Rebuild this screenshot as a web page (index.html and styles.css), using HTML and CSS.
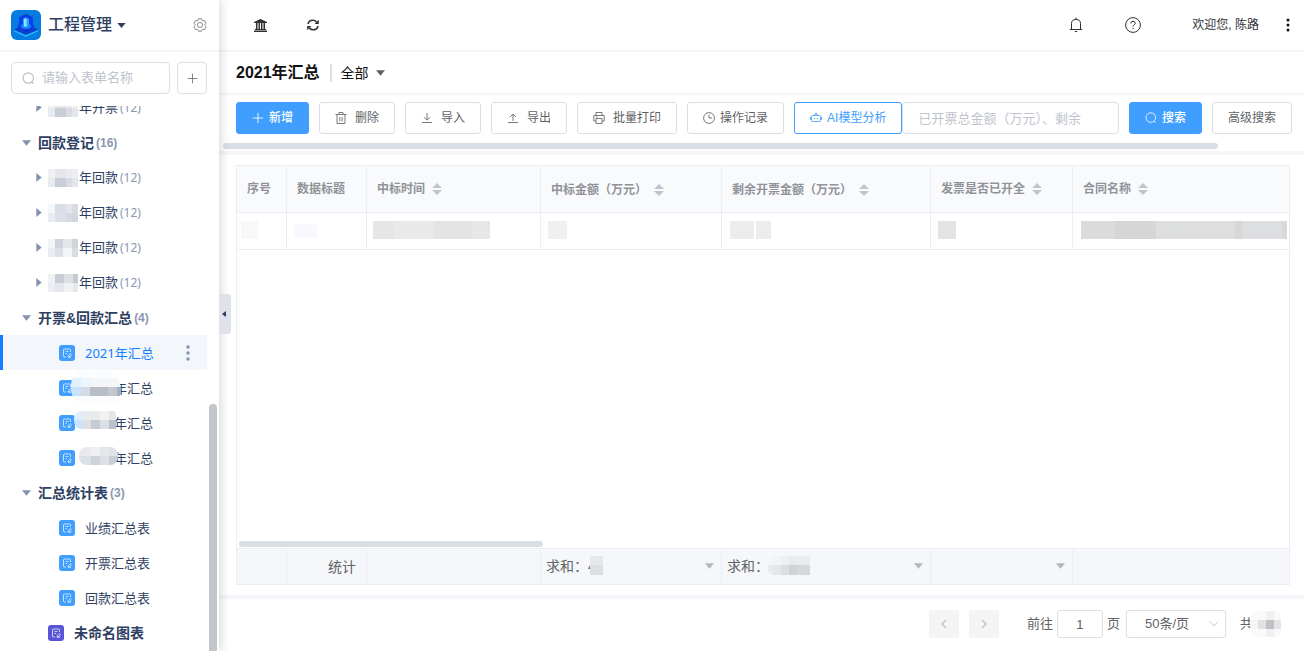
FILE: index.html
```html
<!DOCTYPE html>
<html lang="zh-CN">
<head>
<meta charset="utf-8">
<meta name="viewport" content="width=device-width, initial-scale=1">
<title>工程管理</title>
<link rel="stylesheet" href="styles.css">
</head>
<body>
<svg class="sprite" aria-hidden="true">
  <symbol id="form" viewBox="0 0 16 16"><rect width="16" height="16" rx="3" fill="currentColor"/><path d="M11.500 7V5q0-1-1-1h-5q-1 0-1 1v6q0 1 1 1H7M6.500 6.500h3M6.500 8.500H8M9 12l.3-1.500 2-2 1.200 1.200-2 2zM9 12.200h3.200" fill="none" stroke="#e4f1ff" stroke-width=".8"/></symbol>
  <symbol id="lens" viewBox="0 0 12 12"><circle cx="5.800" cy="5.600" r="4.800" fill="none" stroke="currentColor"/><path d="M9 9.200l1.600 1.800" stroke="currentColor"/></symbol>
  <symbol id="plus" viewBox="0 0 12 12"><path d="M6 .8v10.400M.8 6h10.400" stroke="currentColor"/></symbol>
  <symbol id="sort" viewBox="0 0 10 12"><path d="M5 0l5 5H0zM0 7h10l-5 5z" fill="currentColor"/></symbol>
  <symbol id="down" viewBox="0 0 10 6"><path d="M0 0h10L5 6z" fill="currentColor"/></symbol>
  <symbol id="right" viewBox="0 0 6 10"><path d="M0 0l6 5-6 5z" fill="currentColor"/></symbol>
</svg>
<div class="app">
  <aside class="sidebar">
    <header class="brand">
      <svg class="logo" viewBox="0 0 30 30" aria-hidden="true">
        <rect width="30" height="30" rx="6" fill="#067be0"/>
        <path d="M3 20l4-3 8 4 8-4 4 3-12 5z" fill="#0a3fd0"/>
        <path d="M3 20l12 5 12-5v1.500L15 27 3 21.500z" fill="#22b4f8"/>
        <path d="M8 8l7-3.500L22 8v9l-7 4.500L8 17z" fill="#0d3ff0"/>
        <path d="M8 8l7-3.500L22 8" fill="none" stroke="#0636c4"/>
        <path d="M7 15.500l8 5.500 8-5.500" fill="none" stroke="#0a2fd0" stroke-width="1.500"/>
        <ellipse cx="15" cy="16.500" rx="5.500" ry="2.800" fill="#1a78ff"/>
        <path d="M12 9q3-3 6 0v7q-3 2.500-6 0z" fill="#22a6ff"/>
        <path d="M13 9.500q1.500-1.800 2.500-.8V17l-2.500-.8z" fill="#8ceaff"/>
      </svg>
      <button class="app-name" type="button">工程管理 <svg width="9" height="5"><use href="#down"/></svg></button>
      <button class="icon-button gear" type="button" aria-label="设置">
        <svg width="14" height="14" viewBox="0 0 14 14" fill="none" stroke="currentColor"><path d="M5.500.8h3l.5 1.500 1 .6 1.600-.4 1.500 2.600L12 6.400v1.200l1.100 1.300-1.500 2.600-1.600-.4-1 .6-.5 1.500h-3L5 11.700l-1-.6-1.600.4L.9 8.900 2 7.600V6.400L.9 5.100l1.500-2.600 1.600.4 1-.6z"/><circle cx="7" cy="7" r="2.600"/></svg>
      </button>
    </header>
    <div class="tree-search">
      <label class="tree-field"><svg width="13" height="13"><use href="#lens"/></svg><input type="text" placeholder="请输入表单名称" aria-label="请输入表单名称"></label>
      <button class="add-form" type="button" aria-label="添加"><svg width="11" height="11"><use href="#plus"/></svg></button>
    </div>
    <nav class="tree">
      <ul>
        <li class="row year"><svg width="6" height="9"><use href="#right"/></svg><span class="mask mask-a"></span><span>年开票</span><small>(12)</small></li>
        <li class="row group"><svg width="9" height="6"><use href="#down"/></svg><span>回款登记</span><small>(16)</small></li>
        <li class="row year"><svg width="6" height="9"><use href="#right"/></svg><span class="mask mask-a"></span><span>年回款</span><small>(12)</small></li>
        <li class="row year"><svg width="6" height="9"><use href="#right"/></svg><span class="mask mask-b"></span><span>年回款</span><small>(12)</small></li>
        <li class="row year"><svg width="6" height="9"><use href="#right"/></svg><span class="mask mask-c"></span><span>年回款</span><small>(12)</small></li>
        <li class="row year"><svg width="6" height="9"><use href="#right"/></svg><span class="mask mask-d"></span><span>年回款</span><small>(12)</small></li>
        <li class="row group"><svg width="9" height="6"><use href="#down"/></svg><span>开票&amp;回款汇总</span><small>(4)</small></li>
        <li class="row leaf selected"><svg width="16" height="16"><use href="#form"/></svg><a href="#summary-2021">2021年汇总</a>
          <button class="icon-button row-more" type="button" aria-label="更多"><svg width="4" height="16" fill="currentColor"><circle cx="2" cy="2" r="1.700"/><circle cx="2" cy="8" r="1.700"/><circle cx="2" cy="14" r="1.700"/></svg></button></li>
        <li class="row leaf hidden-year"><svg width="16" height="16"><use href="#form"/></svg><a href="#a">年汇总</a><span class="cover cover-a"></span></li>
        <li class="row leaf hidden-year"><svg width="16" height="16"><use href="#form"/></svg><a href="#b">年汇总</a><span class="cover cover-b"></span></li>
        <li class="row leaf hidden-year"><svg width="16" height="16"><use href="#form"/></svg><a href="#c">年汇总</a><span class="cover cover-c"></span></li>
        <li class="row group"><svg width="9" height="6"><use href="#down"/></svg><span>汇总统计表</span><small>(3)</small></li>
        <li class="row leaf"><svg width="16" height="16"><use href="#form"/></svg><a href="#d">业绩汇总表</a></li>
        <li class="row leaf"><svg width="16" height="16"><use href="#form"/></svg><a href="#e">开票汇总表</a></li>
        <li class="row leaf"><svg width="16" height="16"><use href="#form"/></svg><a href="#f">回款汇总表</a></li>
        <li class="row chart"><svg width="16" height="16"><use href="#form"/></svg><a href="#g">未命名图表</a></li>
      </ul>
      <span class="tree-thumb"></span>
    </nav>
    <button class="collapse" type="button" aria-label="收起"><svg width="4" height="6"><path d="M4 0v6L0 3z" fill="#303c5c"/></svg></button>
  </aside>

  <main class="main">
    <header class="topbar">
      <button class="icon-button" type="button" aria-label="首页"><svg width="13" height="13" viewBox="0 0 13 13" fill="currentColor"><path d="M6.500 0L13 3v1H0V3zM2 4h1.500v6H2zM4.500 4H6v6H4.500zM7 4h1.500v6H7zM9.500 4H11v6H9.500zM1 10h11v1H1zM0 11.500h13V13H0z"/></svg></button>
      <button class="icon-button" type="button" aria-label="刷新"><svg width="12" height="12" viewBox="0 0 12 12"><path d="M1 5q.8-3.800 5-3.800 2 0 3.600 1.700M11 7q-.8 3.800-5 3.800-2 0-3.600-1.700" fill="none" stroke="currentColor" stroke-width="1.600"/><path d="M11.800.8V5H7.600zM.2 11.200V7h4.200z" fill="currentColor"/></svg></button>
      <div class="user-tools">
        <button class="icon-button" type="button" aria-label="通知"><svg width="14" height="16" viewBox="0 0 14 16" fill="none" stroke="currentColor"><path d="M7 .5V2M2.500 12.500v-6Q2.500 2.500 7 2.500t4.500 4v6M.8 12.500h12.400M5.800 14.500h2.400"/></svg></button>
        <button class="icon-button" type="button" aria-label="帮助"><svg width="16" height="16" viewBox="0 0 16 16" fill="none" stroke="currentColor"><circle cx="8" cy="8" r="7.400"/><path d="M5.800 6.500q0-2.300 2.200-2.300t2.200 2q0 1-1.100 1.700T8 9.700M8 10.900v1.300"/></svg></button>
        <span class="welcome">欢迎您, 陈路</span>
        <button class="icon-button more" type="button" aria-label="更多"><svg width="4" height="14" fill="#111"><circle cx="2" cy="2" r="1.500"/><circle cx="2" cy="7" r="1.500"/><circle cx="2" cy="12" r="1.500"/></svg></button>
      </div>
    </header>

    <div class="titlebar">
      <h1>2021年汇总</h1>
      <button class="view-picker" type="button">全部 <svg width="9" height="6"><use href="#down"/></svg></button>
    </div>

    <section class="toolbar">
      <div class="tools">
        <div class="actions">
          <button class="btn primary tight" type="button"><svg><use href="#plus"/></svg>新增</button>
          <button class="btn" type="button"><svg viewBox="0 0 12 12"><path d="M.5 2.500h11M4 2.500v-2h4v2M2 2.500v9h8v-9M4.800 5v4.500M7.200 5v4.500"/></svg>删除</button>
          <button class="btn" type="button"><svg viewBox="0 0 12 12"><path d="M6 1v7M3 5.200l3 3 3-3M1 10.500h10"/></svg>导入</button>
          <button class="btn" type="button"><svg viewBox="0 0 12 12"><path d="M6 9V2M3 5l3-3 3 3M1 10.500h10"/></svg>导出</button>
          <button class="btn" type="button"><svg viewBox="0 0 12 12"><path d="M3 3.500v-3h6v3M3 9H.8V3.500h10.400V9H9M3 6.500h6v5H3zM3 5h1.500"/></svg>批量打印</button>
          <button class="btn tight" type="button"><svg viewBox="0 0 12 12"><circle cx="6" cy="6" r="5.400"/><path d="M6 2.800V6h3"/></svg>操作记录</button>
          <button class="btn outline tight" type="button"><svg viewBox="0 0 12 12"><path d="M2.500 3.500h7q1 0 1 1v4q0 1-1 1h-7q-1 0-1-1v-4q0-1 1-1zM4 3.300Q4.500 2 6 2t2 1.300M6 2V.8M.5 5v3M11.500 5v3M4.500 6v1.200M7.500 6v1.200"/></svg>AI模型分析</button>
        </div>
        <form class="search">
          <input type="text" placeholder="已开票总金额（万元）、剩余" aria-label="搜索内容">
          <button class="btn primary tight" type="button"><svg><use href="#lens"/></svg>搜索</button>
          <button class="btn" type="button">高级搜索</button>
        </form>
      </div>
      <div class="tools-thumb"></div>
    </section>

    <section class="sheet">
      <div class="grid">
        <table>
          <colgroup><col class="c1"><col class="c2"><col class="c3"><col class="c4"><col class="c5"><col class="c6"><col></colgroup>
          <thead><tr><th>序号</th><th>数据标题</th><th>中标时间<svg><use href="#sort"/></svg></th><th>中标金额<span class="centred">（</span>万元<span class="centred">）</span><svg><use href="#sort"/></svg></th><th>剩余开票金额<span class="centred">（</span>万元<span class="centred">）</span><svg><use href="#sort"/></svg></th><th>发票是否已开全<svg><use href="#sort"/></svg></th><th>合同名称<svg><use href="#sort"/></svg></th></tr></thead>
          <tbody><tr><td><span class="blank b1"></span></td><td><span class="blank b2"></span></td><td><span class="blank b3"></span></td><td><span class="blank b4"></span></td><td><span class="blank b5"></span></td><td><span class="blank b6"></span></td><td><span class="blank b7"></span></td></tr></tbody>
        </table>
        <div class="space"><div class="grid-thumb"></div></div>
        <table class="totals">
          <colgroup><col class="c1"><col class="c2"><col class="c3"><col class="c4"><col class="c5"><col class="c6"><col></colgroup>
          <tbody><tr><td></td><td class="stat">统计</td><td></td>
            <td><button class="sum" type="button"><span>求和<span class="centred">：</span><span class="digits">4<span class="veil veil-a"></span></span></span><svg width="9" height="6"><use href="#down"/></svg></button></td>
            <td><button class="sum" type="button"><span>求和<span class="centred">：</span><span class="digits"><span class="veil veil-b"></span></span></span><svg width="9" height="6"><use href="#down"/></svg></button></td>
            <td><button class="sum" type="button" aria-label="统计方式"><span></span><svg width="9" height="6"><use href="#down"/></svg></button></td><td></td></tr></tbody>
        </table>
      </div>
    </section>

    <footer class="pager">
      <button class="page-step" type="button" aria-label="上一页"><svg width="8" height="12"><path d="M6 2L2 6l4 4"/></svg></button>
      <button class="page-step" type="button" aria-label="下一页"><svg width="8" height="12"><path d="M2 2l4 4-4 4"/></svg></button>
      <label class="goto"><span>前往</span><input type="text" value="1"><span>页</span></label>
      <span class="size"><select aria-label="每页条数"><option>50条/页</option></select><svg width="10" height="6"><path d="M1 .5l4 4.500L9 .5"/></svg></span>
      <span class="total">共<span class="total-mask"></span></span>
    </footer>
  </main>
</div>
</body>
</html>
```
FILE: styles.css
```css
* { box-sizing: border-box; }
body {
  margin: 0;
  color: #606266;
  background: #fff;
  font: 13px/20px "Liberation Sans", "Noto Sans CJK SC", sans-serif;
}
button, input, select { font: inherit; color: inherit; margin: 0; }
button { padding: 0; border: 0; background: none; cursor: pointer; }
a { color: inherit; text-decoration: none; }
svg { display: block; flex: none; }
.sprite { position: absolute; width: 0; height: 0; }
input::placeholder { color: #c0c4cc; opacity: 1; }
.centred { font-family: "Noto Sans CJK TC", sans-serif; }
.app { display: grid; grid-template-columns: 219px minmax(0, 1fr); height: 100vh; }
.icon-button { display: flex; align-items: center; }

/* Sidebar */
.sidebar {
  position: relative;
  z-index: 1;
  display: flex;
  flex-direction: column;
  min-height: 0;
  background: #fff;
  box-shadow: 2px 0 10px rgba(0, 0, 0, .15);
  color: #2f3f63;
}
.brand {
  display: flex;
  align-items: center;
  height: 52px;
  flex: none;
  padding: 0 12px 0 11px;
  border-bottom: 2px solid #f4f6fb;
}
.logo { width: 30px; height: 30px; }
.app-name {
  display: flex;
  align-items: center;
  gap: 5px;
  margin-left: 7px;
  font-size: 16px;
  line-height: 24px;
  font-weight: 500;
}
.gear { margin-left: auto; color: #85888e; }
.tree-search { display: flex; gap: 7px; padding: 10px 12px 12px 11px; }
.tree-field, .add-form {
  display: flex;
  align-items: center;
  height: 32px;
  border: 1px solid #dcdfe6;
  border-radius: 4px;
}
.tree-field { flex: 1; min-width: 0; padding-left: 10px; gap: 7px; color: #b9bdc6; }
.tree-field input { width: 100%; min-width: 0; padding: 0; border: 0; outline: 0; background: none; }
.add-form { width: 30px; justify-content: center; color: #75787e; }
.tree { position: relative; flex: 1; min-height: 0; overflow: hidden; }
.tree ul { list-style: none; margin: -16px 12px 0 0; padding: 0; }
.row { position: relative; display: flex; align-items: center; height: 35px; white-space: nowrap; }
.row > svg { color: #8492ae; }
.row small { margin-left: 2px; font-size: 12px; color: #8b97b0; }
.group { padding-left: 22px; font-size: 14px; font-weight: 700; }
.group > svg { margin-right: 7px; }
.year { padding-left: 36px; }
.year small { font-family: "Noto Sans", sans-serif; }
.leaf { padding-left: 59px; gap: 10px; font-family: "Noto Sans", "Noto Sans CJK SC", sans-serif; }
.row.leaf > svg { color: #409eff; }
.chart { padding-left: 48px; gap: 10px; font-size: 14px; font-weight: 700; }
.row.chart > svg { color: #5a55d6; }
.selected { background: #f3f7fc; border-left: 3px solid #127dff; padding-left: 56px; color: #127dff; }
.row-more { margin-left: auto; padding-right: 17px; color: #8492ae; }
.hidden-year a { margin-left: 29px; }
.mask { width: 30px; height: 18px; margin: 0 1px 0 6px; background-size: 100% 50%; background-repeat: no-repeat; background-position: top, bottom; }
.mask-a { background-image: linear-gradient(90deg, #eff1f3 7px, #e4e6ea 7px 18px, #e9ebee 18px 24px, #edeff1 24px), linear-gradient(90deg, #e7eaee 7px, #c8cdd7 7px 18px, #d8dce2 18px 24px, #e3e6ec 24px); }
.mask-b { background-image: linear-gradient(90deg, #f4f6f8 7px, #dadee7 7px 18px, #e4e5e9 18px 24px, #d8dce2 24px), linear-gradient(90deg, #e9ecf0 7px, #dce1e9 7px 18px, #d6dae3 18px 24px, #d1d6df 24px); }
.mask-c { background-image: linear-gradient(90deg, #f2f4f5 7px, #ced3de 7px 15px, #e4e6ea 15px 24px, #ced3dc 24px), linear-gradient(90deg, #e9ecf0 7px, #dce0e9 7px 15px, #f4f5f6 15px 24px, #d8dce4 24px); }
.mask-d { background-image: linear-gradient(90deg, #f1f2f4 7px, #c7ccd5 7px 16px, #dfe0e5 16px 25px, #c4c9d2 25px), linear-gradient(90deg, #eceef1 7px, #e4e6eb 7px 16px, #f0f1f3 16px 25px, #e3e6eb 25px); }
.cover { position: absolute; height: 18px; background-size: 100% 50%; background-repeat: no-repeat; background-position: top, bottom; }
.cover-a { left: 71px; top: -1px; width: 50px; height: 36px; border-radius: 18px 24px 16px 18px; background-color: #fbfcfd; background-size: 100% 9px; background-position: 0 9px, 0 18px; background-image: linear-gradient(90deg, #e3f1ff 10px, #edf5fc 10px 20px, #f5f6f8 20px), linear-gradient(90deg, #c9e2fd 10px, #d4dbe5 10px 19px, #b8bdca 19px 37px, #c4c7d0 37px 46px, #a8afbe 46px); }
.cover-b { left: 74px; top: 6px; width: 42px; border-radius: 8px 3px 0 8px; background-image: linear-gradient(90deg, #e0efff 8px, #e9eaec 8px 26px, #f2f2f3 26px 35px, #e4e6e9 35px), linear-gradient(90deg, #c9e2fd 8px, #dcdfe5 8px 17px, #c6cad3 17px 26px, #dcdfe5 26px 35px, #bac0cc 35px); }
.cover-c { left: 79px; top: 7px; width: 39px; border-radius: 8px; background-image: linear-gradient(90deg, #e8eaee 12px, #f0f0f2 12px 21px, #e4e6ea 21px 30px, #dfe2e6 30px), linear-gradient(90deg, #dae1e9 12px, #ced2d9 12px 21px, #dedfe5 21px 30px, #c9cdd6 30px); }
.tree-thumb { position: absolute; right: 2px; top: 298px; bottom: 0; width: 8px; border-radius: 4px 4px 0 0; background: #c2c6cc; }
.collapse {
  position: absolute;
  left: 100%;
  top: 294px;
  display: flex;
  align-items: center;
  justify-content: center;
  width: 12px;
  height: 40px;
  padding-right: 2px;
  border-radius: 0 3px 3px 0;
  background: #dfe2ea;
}

/* Main */
.main { display: flex; flex-direction: column; min-width: 0; min-height: 0; }
.topbar { display: flex; align-items: center; gap: 40px; height: 52px; flex: none; padding: 0 14px 0 35px; border-bottom: 2px solid #f4f6fb; color: #303133; }
.user-tools { display: flex; align-items: center; margin-left: auto; gap: 42px; }
.welcome { margin-left: 9px; font-size: 12px; }
.more { margin-left: -15px; }
.titlebar { display: flex; align-items: center; height: 43px; flex: none; padding: 0 17px; border-bottom: 2px solid #f4f6fb; color: #111; }
.titlebar h1 { margin: 0; font-size: 16px; font-weight: 700; }
.view-picker { display: flex; align-items: center; gap: 7px; height: 18px; margin-left: 10px; padding-left: 9px; border-left: 2px solid #dcdfe6; font-size: 14px; }
.view-picker svg { color: #606266; }
.toolbar { flex: none; padding: 7px 0 2px 4px; border-bottom: 4px solid #f5f7fa; }
.tools { display: flex; padding: 0 12px 9px 13px; }
.actions, .search { display: flex; gap: 10px; }
.search { flex: 1; min-width: 0; }
.search input { flex: 1; min-width: 0; height: 32px; padding: 0 15px; border: 1px solid #dcdfe6; border-radius: 4px; outline: 0; }
.btn {
  display: flex;
  align-items: center;
  gap: 8px;
  height: 32px;
  padding: 0 15px;
  border: 1px solid #dcdfe6;
  border-radius: 3px;
  font-size: 12px;
  white-space: nowrap;
}
.btn svg { width: 12px; height: 12px; fill: none; stroke: currentColor; stroke-width: 1; opacity: .85; }
.tight { gap: 5px; }
.primary { background: #409eff; border-color: #409eff; color: #fff; font-weight: 500; }
.outline { border-color: #409eff; color: #409eff; }
.tools-thumb { width: 92%; height: 6px; border-radius: 3px; background: #dadee7; }

/* Table */
.sheet { display: flex; flex: 1; min-height: 0; padding: 10px 14px 10px 17px; border-bottom: 4px solid #f5f7fa; }
.grid { display: flex; flex-direction: column; flex: 1; min-width: 0; border: 1px solid #ebeef5; }
table { width: 100%; table-layout: fixed; border-collapse: separate; border-spacing: 0; }
.c1 { width: 50px; }
.c2 { width: 80px; }
.c3 { width: 174px; }
.c4 { width: 181px; }
.c5 { width: 209px; }
.c6 { width: 142px; }
th, td { padding: 0; border-right: 1px solid #ebeef5; border-bottom: 1px solid #ebeef5; text-align: left; }
th:last-child, td:last-child { border-right: 0; }
th { height: 47px; padding: 0 10px; background: #f9fafc; color: #909399; font-size: 12px; font-weight: 700; white-space: nowrap; }
th svg { display: inline-block; width: 10px; height: 12px; margin-left: 7px; vertical-align: -2px; color: #c0c4cc; }
td { height: 37px; }
.blank { display: block; height: 18px; margin: 0 0 2px 7px; background: #ececec; }
.b1 { width: 17px; margin-left: 4px; background: #f8f8f8; }
.b2 { width: 23px; height: 14px; margin-bottom: 0; background: #f7f9fe; }
.b3 { width: 117px; margin-left: 6px; background: linear-gradient(90deg, #e6e6e6 21px, #e9e9e9 21px 61px, #e4e4e4 61px 99px, #e7e7e7 99px); }
.b4 { width: 19px; background: #f0f0f0; }
.b5 { width: 41px; margin-left: 8px; background: linear-gradient(90deg, #ececec 24px, #fff 24px 26px, #ececec 26px); }
.b6 { width: 18px; background: #e3e3e3; }
.b7 { width: auto; margin-left: 8px; margin-right: 2px; background: linear-gradient(90deg, #dbdbdb 34px, #d6d6d6 34px 75px, #dcdfde 75px 118px, #dedede 118px 154px, #d7d7d7 154px 161px, #dcdee1 161px 201px, #d9d9d9 201px); }
.space { display: flex; align-items: flex-end; flex: 1; padding: 0 2px 1px; border-bottom: 1px solid #ebeef5; }
.grid-thumb { width: 29%; height: 6px; border-radius: 3px; background: #dadee5; }
.totals { background: #f5f7fa; }
.totals td { height: 35px; border-bottom: 0; font-size: 14px; }
.totals .stat { padding-right: 10px; text-align: right; }
.sum { display: flex; align-items: center; justify-content: space-between; width: 100%; padding: 0 7px 2px 5px; white-space: nowrap; }
.sum svg { color: #b4b6ba; }
.digits { position: relative; }
.veil { position: absolute; top: -2px; height: 19px; }
.veil-a { left: 2px; width: 13px; background: linear-gradient(#e6e9ec 50%, #dcdfe2 50%); }
.veil-b { left: -1px; width: 42px; border-radius: 9px 0 0 5px; background: linear-gradient(#fff8 50%, #fff0 50%), linear-gradient(90deg, #e9ebec 5px, #e3e7eb 5px 13px, #dbdfe2 13px 21px, #cfd2d6 21px 29px, #d5d7db 29px); }

/* Pagination */
.pager { display: flex; align-items: center; justify-content: flex-end; height: 52px; flex: none; padding: 0 23px 2px; }
.page-step { display: grid; place-items: center; width: 30px; height: 28px; margin-right: 10px; border-radius: 2px; background: #f4f4f5; }
.page-step svg, .size svg { fill: none; stroke: #c0c4cc; stroke-width: 1.5; }
.goto { display: flex; align-items: center; gap: 4px; margin: 0 6px 0 18px; }
.goto input, .size select { height: 28px; border: 1px solid #dcdfe6; border-radius: 3px; background: #fff; outline: 0; }
.goto input { width: 46px; padding: 0; text-align: center; }
.size { display: grid; align-items: center; margin-right: 14px; }
.size select { grid-area: 1 / 1; width: 100px; padding: 0 0 0 18px; appearance: none; }
.size svg { grid-area: 1 / 1; justify-self: end; margin-right: 7px; stroke-width: 1; pointer-events: none; }
.total { display: flex; align-items: center; }
.total-mask { width: 31px; height: 26px; margin-left: -3px; border-radius: 6px; background: linear-gradient(90deg, #f5f5f5 8px, #e0e1e2 8px 16px, #bfc1c4 16px 24px, #e3e4e5 24px) 0 9px / 100% 9px no-repeat, linear-gradient(90deg, #fafafa 16px, #f0f0f0 16px 24px, #fafafa 24px); }
```
